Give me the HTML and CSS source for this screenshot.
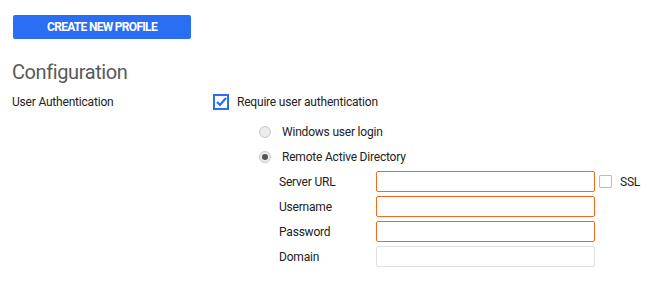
FILE: index.html
```html
<!DOCTYPE html>
<html lang="en">
<head>
  <meta charset="UTF-8" />
  <title>Configuration</title>
  <link rel="stylesheet" href="styles.css">
</head>
<body>
  <div class="page">
    <button class="create-btn">CREATE NEW PROFILE</button>

    <h2 class="section-title">Configuration</h2>

    <div class="setting">
      <div class="setting-label">User Authentication</div>
      <div class="setting-body">
        <label class="check-row">
          <span class="checkbox checked">
            <svg viewBox="0 0 16 16" width="16" height="16">
              <rect x="1" y="1" width="14" height="14" fill="none" stroke="#2a6ff3" stroke-width="2"/>
              <path d="M4 8 L7 11 L13 4" fill="none" stroke="#2a6ff3" stroke-width="2.2"/>
            </svg>
          </span>
          Require user authentication
        </label>

        <div class="options">
          <label class="radio-row"><span class="radio"></span>Windows user login</label>
          <label class="radio-row"><span class="radio selected"></span>Remote Active Directory</label>

          <div class="fields">
            <div class="field">
              <span class="field-label">Server URL</span>
              <input type="text" class="text-input required">
              <label class="ssl"><span class="checkbox small"></span>SSL</label>
            </div>
            <div class="field">
              <span class="field-label">Username</span>
              <input type="text" class="text-input required">
            </div>
            <div class="field">
              <span class="field-label">Password</span>
              <input type="password" class="text-input required">
            </div>
            <div class="field">
              <span class="field-label">Domain</span>
              <input type="text" class="text-input">
            </div>
          </div>
        </div>
      </div>
    </div>
  </div>
</body>
</html>
```

FILE: styles.css
```css
:root {
  --brand-blue: #2a6ff3;
  --alert-orange: #f26a1b;
  --text-dark: #222;
  --title-gray: #595959;
  --border-gray: #e0e0e0;
}

body {
  margin: 0;
  font-family: Roboto, 'Liberation Sans', sans-serif;
  font-size: 12px;
  letter-spacing: -0.2px;
  color: var(--text-dark);
  background: white;
}

.page {
  padding: 15px 12px;
}

.create-btn {
  display: block;
  width: 178px;
  height: 24px;
  margin-left: 1px;
  padding: 0;
  border: none;
  border-radius: 2px;
  background-color: var(--brand-blue);
  color: white;
  font-family: Roboto, sans-serif;
  font-size: 12px;
  font-weight: bold;
  letter-spacing: -0.7px;
  cursor: pointer;
}

.section-title {
  margin: 21px 0 0;
  font-size: 20px;
  font-weight: normal;
  letter-spacing: -0.4px;
  color: var(--title-gray);
  line-height: 24px;
}

.setting {
  display: flex;
  margin-top: 10px;
}

.setting-label {
  width: 201px;
  line-height: 16px;
}

.check-row {
  display: flex;
  align-items: center;
  gap: 8px;
  height: 16px;
}

.checkbox {
  display: inline-block;
  width: 16px;
  height: 16px;
}

.checkbox.small {
  width: 11px;
  height: 11px;
  border: 1px solid #bbb;
  border-radius: 1px;
}

.options {
  padding-left: 46px;
  margin-top: 9px;
}

.radio-row {
  display: flex;
  align-items: center;
  gap: 11px;
  height: 25px;
}

.radio {
  box-sizing: border-box;
  width: 12px;
  height: 12px;
  border: 1px solid #c8c8c8;
  border-radius: 50%;
  background: #ececec;
  position: relative;
}

.radio.selected::after {
  content: "";
  position: absolute;
  top: 2px;
  left: 2px;
  width: 6px;
  height: 6px;
  border-radius: 50%;
  background: #555;
}

.fields {
  padding-left: 20px;
}

.field {
  display: flex;
  align-items: center;
  height: 25px;
}

.field-label {
  width: 97px;
}

.text-input {
  box-sizing: border-box;
  width: 219px;
  height: 21px;
  margin: 0;
  border: 1px solid var(--border-gray);
  border-radius: 2px;
  outline: none;
}

.text-input.required {
  border-color: var(--alert-orange);
}

.ssl {
  display: flex;
  align-items: center;
  gap: 8px;
  margin-left: 4px;
}
```
